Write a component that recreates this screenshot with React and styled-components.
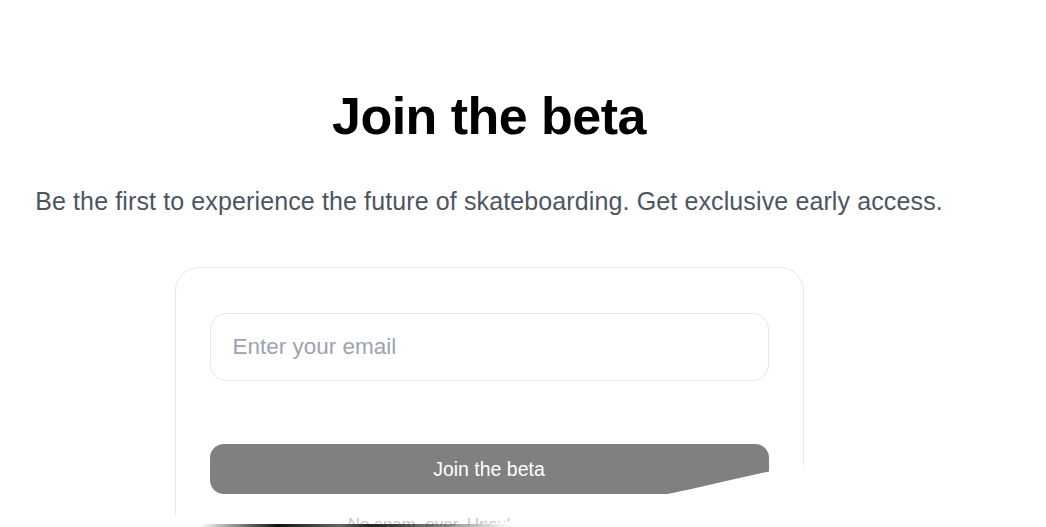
import React from "react";
import styled, { createGlobalStyle } from "styled-components";

const GlobalStyle = createGlobalStyle`
  html, body {
    margin: 0;
    padding: 0;
    background: #ffffff;
    font-family: "Liberation Sans", Arial, sans-serif;
  }
  #root {
    position: relative;
    height: 527px;
    overflow: hidden;
  }
`;

const App = () => {
  return (
    <>
      <GlobalStyle />
      <Section>
        <Heading>Join the beta</Heading>
        <Lead>
          Be the first to experience the future of skateboarding. Get exclusive
          early access.
        </Lead>
        <Card>
          <EmailInput type="email" placeholder="Enter your email" />
          <SubmitButton type="button">Join the beta</SubmitButton>
          <Note>No spam, ever. Unsubscribe anytime.</Note>
        </Card>
      </Section>
      <WaveOverlay viewBox="0 0 1046 97" preserveAspectRatio="none">
        <defs>
          <linearGradient id="edge" x1="0" x2="1" y1="0" y2="0">
            <stop offset="0" stopColor="#000" stopOpacity="0" />
            <stop offset="0.25" stopColor="#111" stopOpacity="1" />
            <stop offset="0.45" stopColor="#666" stopOpacity="1" />
            <stop offset="0.55" stopColor="#222" stopOpacity="1" />
            <stop offset="1" stopColor="#000" stopOpacity="0" />
          </linearGradient>
        </defs>
        <path
          d="M0 97 L0 88 C90 84 150 84 180 85 C260 90 320 97 400 97 C470 97 510 92 560 84 C620 74 660 66 700 57 C740 48 780 38 810 34 C900 24 980 14 1046 6 L1046 97 Z"
          fill="#ffffff"
        />
        <rect x="200" y="94" width="310" height="3" fill="url(#edge)" />
      </WaveOverlay>
    </>
  );
};

export default App;

const Section = styled.section`
  width: 978px;
  padding-top: 84px;
  display: flex;
  flex-direction: column;
  align-items: center;
  text-align: center;
`;

const Heading = styled.h1`
  margin: 0;
  font-size: 52px;
  line-height: 65px;
  font-weight: 700;
  letter-spacing: -0.01em;
  color: #000000;
`;

const Lead = styled.p`
  margin: 34px 0 0;
  font-size: 25px;
  line-height: 36px;
  letter-spacing: 0.12px;
  color: #4b5563;
  white-space: nowrap;
`;

const Card = styled.div`
  margin-top: 48px;
  width: 629px;
  box-sizing: border-box;
  padding: 45px 34px 40px;
  border: 1px solid #e5e7eb;
  border-radius: 24px;
  background: #ffffff;
  display: flex;
  flex-direction: column;
`;

const EmailInput = styled.input`
  height: 68px;
  box-sizing: border-box;
  padding: 0 22px;
  border: 1px solid #e5e7eb;
  border-radius: 16px;
  font-family: inherit;
  font-size: 22.5px;
  color: #111827;
  outline: none;
  &::placeholder {
    color: #9ca3af;
  }
`;

const SubmitButton = styled.button`
  margin-top: 63px;
  height: 50px;
  border: none;
  border-radius: 14px;
  background: #808080;
  color: #ffffff;
  font-family: inherit;
  font-size: 19.5px;
  cursor: pointer;
`;

const Note = styled.p`
  margin: 21px 0 0;
  font-size: 17px;
  line-height: 20px;
  color: #c4c9d1;
`;

const WaveOverlay = styled.svg`
  position: absolute;
  left: 0;
  top: 430px;
  width: 1046px;
  height: 97px;
  pointer-events: none;
`;
